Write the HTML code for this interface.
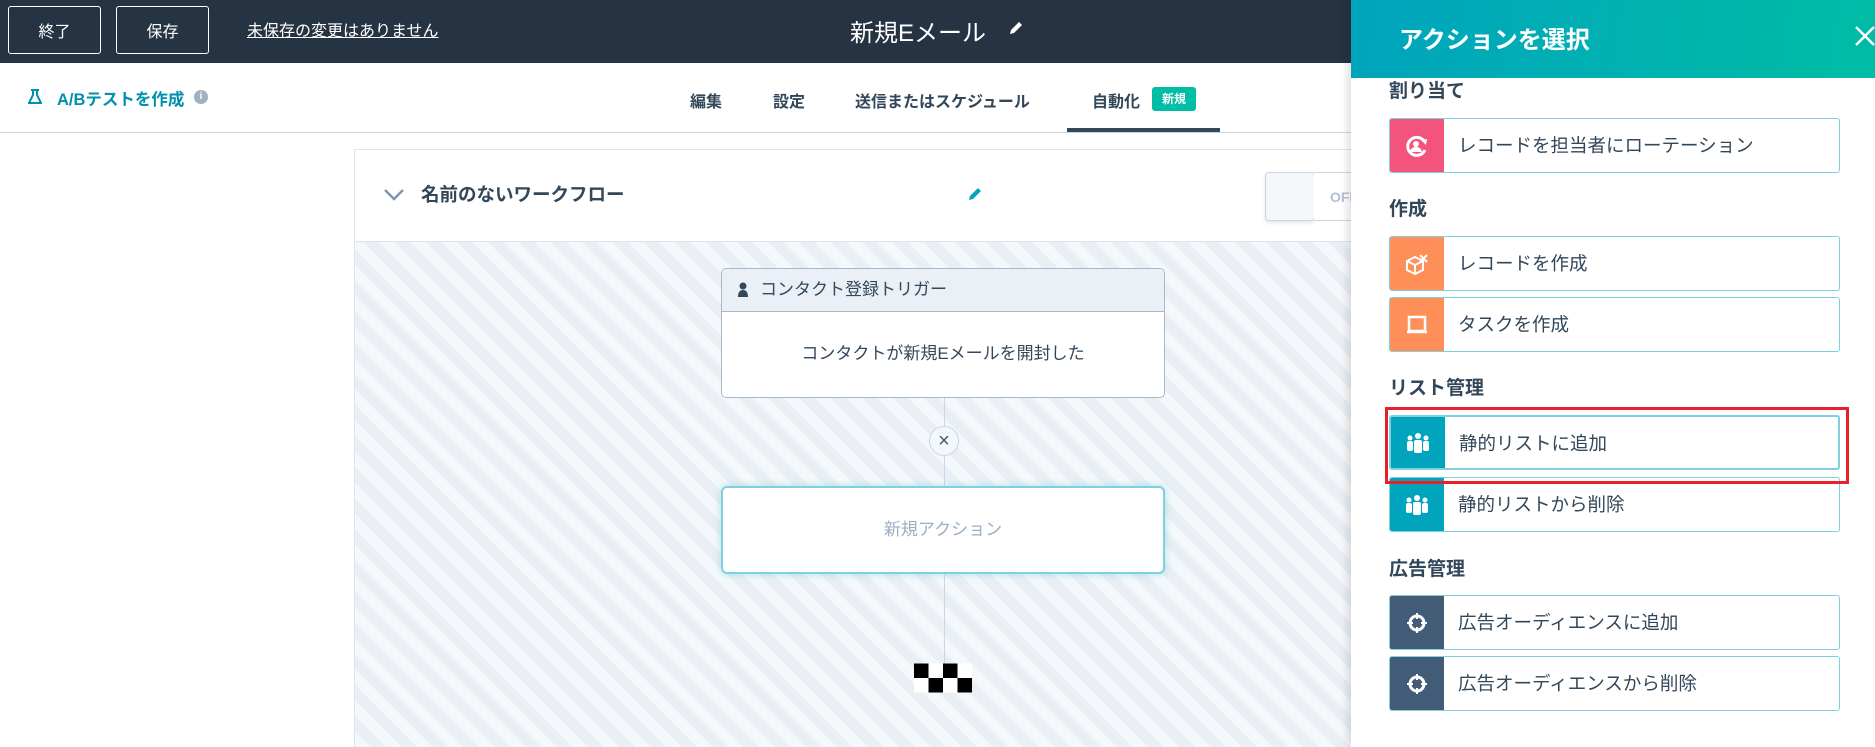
<!DOCTYPE html>
<html><head><meta charset="utf-8"><style>
*{box-sizing:border-box;margin:0;padding:0}
body{width:1875px;height:747px;overflow:hidden;position:relative;background:#fff;font-family:"Liberation Sans","Noto Sans CJK JP",sans-serif;color:#33475b}
.abs{position:absolute}
#top{left:0;top:0;width:1875px;height:63px;background:#253342}
.btn{top:6px;height:48px;border:1px solid #fff;border-radius:3px;color:#fff;font-size:16px;display:flex;align-items:center;justify-content:center}
#sub{left:0;top:63px;width:1875px;height:70px;border-bottom:1px solid #cbd6e2;background:#fff}
.tab{top:88px;font-size:16px;font-weight:bold;color:#33475b}
#canvas{left:354px;top:242px;width:1000px;height:505px;background:repeating-linear-gradient(45deg,#f5f8fa 0 11px,#e9eff5 11px 22px);border-left:1px solid #dfe3eb}
#wfhead{left:354px;top:149px;width:1000px;height:93px;border:1px solid #dfe3eb;background:#fff}
#panel{left:1351px;top:0;width:524px;height:747px;background:#fff;box-shadow:-4px 0 8px rgba(0,0,0,.12)}
#ph{left:0;top:0;width:524px;height:78px;background:linear-gradient(100deg,#00a4bd,#00bda5)}
.lab{left:38px;font-size:19px;font-weight:bold;color:#33475b}
.item{left:38px;width:451px;height:55px;border:1px solid #7fd1de;border-radius:3px;background:#fff;overflow:hidden}
.ic{position:absolute;left:0;top:0;width:54px;height:100%;display:flex;align-items:center;justify-content:center}
.it{position:absolute;left:68px;top:0;line-height:53px;font-size:18.5px;color:#33475b}
</style></head><body>
<div id="top" class="abs">
 <div class="abs btn" style="left:8px;width:93px">終了</div>
 <div class="abs btn" style="left:116px;width:93px">保存</div>
 <div class="abs" style="left:247px;top:17px;color:#fff;font-size:16px;text-decoration:underline">未保存の変更はありません</div>
 <div class="abs" style="left:850px;top:13px;color:#fff;font-size:24px">新規Eメール</div>
 <svg class="abs" style="left:1008px;top:20px" width="16" height="16" viewBox="0 0 16 16"><path d="M2 14l1-4 8-8 3 3-8 8z" fill="#fff"/></svg>
</div>
<div id="sub" class="abs">
 <svg class="abs" style="left:28px;top:26px" width="14" height="16" viewBox="0 0 14 16"><path d="M3 1h8M5 1v5L1 14h12L9 6V1" fill="none" stroke="#0091ae" stroke-width="2"/></svg>
 <div class="abs" style="left:57px;top:23px;font-size:16.5px;font-weight:bold;color:#0091ae">A/Bテストを作成</div>
 <div class="abs" style="left:194px;top:27px;width:14px;height:14px;border-radius:50%;background:#9fb0c2;color:#fff;font-size:10px;text-align:center;line-height:14px;font-weight:bold">i</div>
</div>
<div class="abs tab" style="left:690px">編集</div>
<div class="abs tab" style="left:773px">設定</div>
<div class="abs tab" style="left:855px">送信またはスケジュール</div>
<div class="abs tab" style="left:1092px">自動化</div>
<div class="abs" style="left:1152px;top:87px;width:44px;height:24px;border-radius:3px;background:#00bda5;color:#fff;font-size:12px;font-weight:bold;text-align:center;line-height:24px">新規</div>
<div class="abs" style="left:1067px;top:128px;width:153px;height:4px;background:#33475b"></div>

<div id="canvas" class="abs"></div>
<div id="wfhead" class="abs">
 <svg class="abs" style="left:28px;top:38px" width="22" height="14" viewBox="0 0 22 14"><path d="M2 2l9 9 9-9" fill="none" stroke="#7c98b6" stroke-width="2.5"/></svg>
 <div class="abs" style="left:66px;top:31px;font-size:18.5px;font-weight:bold;color:#33475b">名前のないワークフロー</div>
 <svg class="abs" style="left:612px;top:36px" width="16" height="16" viewBox="0 0 16 16"><path d="M2 14l1-4 8-8 3 3-8 8z" fill="#00a4bd"/></svg>
 <div class="abs" style="left:910px;top:22px;width:50px;height:49px;border:1px solid #cbd6e2;border-radius:4px;background:#f5f8fa;box-shadow:0 2px 4px rgba(0,0,0,.1)"></div>
 <div class="abs" style="left:959px;top:22px;width:60px;height:49px;border:1px solid #cbd6e2;border-left:none;background:#fff;color:#b0c1d4;font-size:14px;font-weight:bold;padding:16px 0 0 16px">OFF</div>
</div>
<div class="abs" style="left:944px;top:398px;width:1px;height:266px;background:#cbd6e2"></div>
<div class="abs" style="left:721px;top:268px;width:444px;height:130px;border:1px solid #a9b9cc;border-radius:5px;background:#fff;overflow:hidden">
 <div style="height:43px;background:#eaf0f6;border-bottom:1px solid #a9b9cc;font-size:17px;line-height:42px;padding-left:38px;position:relative">コンタクト登録トリガー
  <svg style="position:absolute;left:15px;top:13px" width="12" height="16" viewBox="0 0 12 16"><circle cx="6" cy="4" r="3.5" fill="#33475b"/><path d="M1 15c0-5 2-7 5-7s5 2 5 7z" fill="#33475b"/></svg></div>
 <div style="text-align:center;font-size:17px;line-height:84px">コンタクトが新規Eメールを開封した</div>
</div>
<div class="abs" style="left:929px;top:426px;width:30px;height:30px;border-radius:50%;border:1px solid #cbd6e2;background:#f5f8fa;text-align:center;line-height:28px;font-size:20px;color:#425b76">×</div>
<div class="abs" style="left:721px;top:486px;width:444px;height:88px;border:2px solid #7fd1de;border-radius:6px;background:#fff;box-shadow:0 0 8px rgba(127,209,222,.6);text-align:center;line-height:84px;font-size:17px;color:#99afc4">新規アクション</div>
<svg class="abs" style="left:914px;top:661px" width="58" height="34" viewBox="0 0 4 2" shape-rendering="crispEdges"><rect width="4" height="2" fill="#fff"/><rect x="0" y="0" width="1" height="1"/><rect x="2" y="0" width="1" height="1"/><rect x="1" y="1" width="1" height="1"/><rect x="3" y="1" width="1" height="1"/></svg>

<div id="panel" class="abs">
 <div id="ph" class="abs">
  <div class="abs" style="left:48px;top:20px;color:#fff;font-size:24px;font-weight:bold">アクションを選択</div>
  <svg class="abs" style="left:503px;top:25px" width="22" height="22" viewBox="0 0 22 22"><path d="M2 2l18 18M20 2L2 20" stroke="#fff" stroke-width="2.5"/></svg>
 </div>
 <div class="abs lab" style="top:76px">割り当て</div>
 <div class="abs item" style="top:118px"><div class="ic" style="background:#f2547d"><svg width="26" height="26" viewBox="0 0 26 26"><path d="M20 8A9 9 0 1 0 21 17" fill="none" stroke="#fff" stroke-width="3"/><path d="M17 7l6-1-1 6z" fill="#fff"/><circle cx="12" cy="11" r="3" fill="#fff"/><path d="M6 19c1-4 3-5 6-5s5 1 6 5z" fill="#fff"/></svg></div><div class="it">レコードを担当者にローテーション</div></div>
 <div class="abs lab" style="top:194px">作成</div>
 <div class="abs item" style="top:236px"><div class="ic" style="background:#ff8f59"><svg width="26" height="22" viewBox="0 0 26 22"><path d="M3 8l8-4 8 4v9l-8 4-8-4z M3 8l8 4 8-4 M11 12v9" fill="none" stroke="#fff" stroke-width="2"/><path d="M16 2l7 7M23 2l-7 7" stroke="#fff" stroke-width="2"/></svg></div><div class="it">レコードを作成</div></div>
 <div class="abs item" style="top:297px"><div class="ic" style="background:#ff8f59"><svg width="22" height="20" viewBox="0 0 22 20"><path d="M3 2h16v14H3zM1 17h20" fill="none" stroke="#fff" stroke-width="2.5"/></svg></div><div class="it">タスクを作成</div></div>
 <div class="abs lab" style="top:373px">リスト管理</div>
 <div class="abs item" style="top:415px;border-width:2px"><div class="ic" style="background:#00a4bd"><svg width="26" height="22" viewBox="0 0 26 22"><circle cx="13" cy="4" r="3" fill="#fff"/><circle cx="5" cy="6" r="2.5" fill="#fff"/><circle cx="21" cy="6" r="2.5" fill="#fff"/><rect x="9" y="8" width="8" height="13" rx="2" fill="#fff"/><rect x="2" y="9" width="6" height="10" rx="2" fill="#fff"/><rect x="18" y="9" width="6" height="10" rx="2" fill="#fff"/></svg></div><div class="it">静的リストに追加</div></div>
 <div class="abs item" style="top:477px"><div class="ic" style="background:#00a4bd"><svg width="26" height="22" viewBox="0 0 26 22"><circle cx="13" cy="4" r="3" fill="#fff"/><circle cx="5" cy="6" r="2.5" fill="#fff"/><circle cx="21" cy="6" r="2.5" fill="#fff"/><rect x="9" y="8" width="8" height="13" rx="2" fill="#fff"/><rect x="2" y="9" width="6" height="10" rx="2" fill="#fff"/><rect x="18" y="9" width="6" height="10" rx="2" fill="#fff"/></svg></div><div class="it">静的リストから削除</div></div>
 <div class="abs" style="left:34px;top:407px;width:464px;height:77px;border:3px solid #e8202a"></div>
 <div class="abs lab" style="top:554px">広告管理</div>
 <div class="abs item" style="top:595px"><div class="ic" style="background:#425b76"><svg width="22" height="22" viewBox="0 0 22 22"><circle cx="11" cy="11" r="7" fill="none" stroke="#fff" stroke-width="3"/><path d="M11 1v6M11 15v6M1 11h6M15 11h6" stroke="#fff" stroke-width="2"/></svg></div><div class="it">広告オーディエンスに追加</div></div>
 <div class="abs item" style="top:656px"><div class="ic" style="background:#425b76"><svg width="22" height="22" viewBox="0 0 22 22"><circle cx="11" cy="11" r="7" fill="none" stroke="#fff" stroke-width="3"/><path d="M11 1v6M11 15v6M1 11h6M15 11h6" stroke="#fff" stroke-width="2"/></svg></div><div class="it">広告オーディエンスから削除</div></div>
</div>
</body></html>
